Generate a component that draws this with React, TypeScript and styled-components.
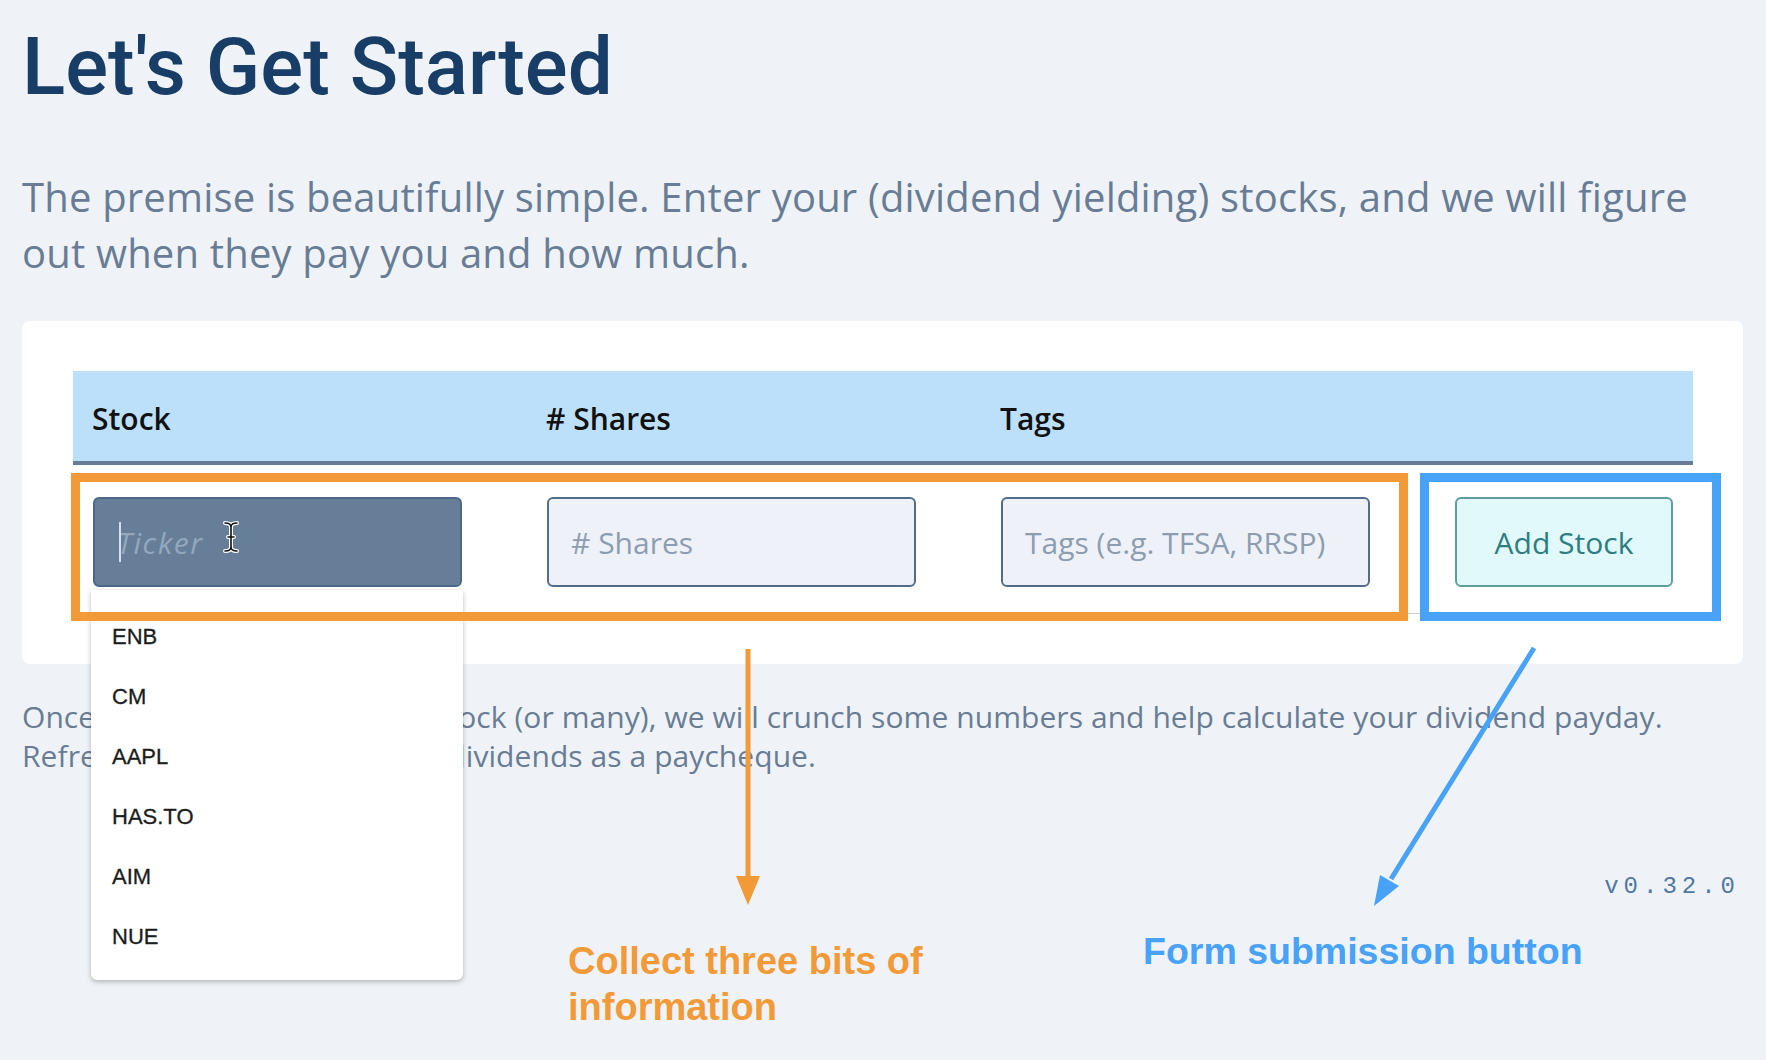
import React from "react";
import styled, { createGlobalStyle } from "styled-components";

const GlobalStyle = createGlobalStyle`
  html, body {
    margin: 0;
    padding: 0;
    background: #eff3f8;
  }
  body {
    font-family: "Open Sans", "Liberation Sans", sans-serif;
  }
  * {
    box-sizing: border-box;
  }
`;

const Page = styled.div`
  position: relative;
  width: 1766px;
  height: 1060px;
  padding: 0 23px 0 22px;
  overflow: hidden;
  background: #eff3f8;
`;

const Title = styled.h1`
  margin: 0;
  padding-top: 27px;
  font-family: Roboto, "Liberation Sans", sans-serif;
  font-weight: 500;
  font-size: 80px;
  line-height: 80px;
  color: #183e67;
`;

const Intro = styled.p`
  margin: 62px 0 0;
  font-size: 40px;
  line-height: 56px;
  letter-spacing: 0.18px;
  color: #687d95;
`;

const Card = styled.div`
  margin-top: 40px;
  background: #ffffff;
  border-radius: 8px;
  padding: 50px 50px 50px 51px;
`;

const HeaderRow = styled.div`
  display: grid;
  grid-template-columns: 454px 454px 454px 1fr;
  height: 94px;
  background: #bde0fa;
  border-bottom: 4px solid #687c95;
`;

const HeaderCell = styled.div`
  display: flex;
  align-items: center;
  padding: 5px 19px 0;
  font-size: 30px;
  font-weight: 600;
  color: #111;
`;

const Row = styled.div`
  display: grid;
  grid-template-columns: 454px 454px 454px 1fr;
  border-bottom: 1px solid #c9d2dc;
`;

const Cell = styled.div`
  position: relative;
  padding: 32px 20px 26px;
`;

const Field = styled.div`
  position: relative;
  width: 369px;
`;

const Input = styled.input<{ $active?: boolean }>`
  display: block;
  width: 100%;
  height: 90px;
  padding: 0 22px;
  border: 2px solid ${(p) => (p.$active ? "#4b6889" : "#536c89")};
  border-radius: 6px;
  background: ${(p) => (p.$active ? "#667e98" : "#eef2f8")};
  font-family: "Open Sans", sans-serif;
  font-size: 30px;
  color: #2b3d52;
  outline: none;

  &::placeholder {
    color: ${(p) => (p.$active ? "#93a7bd" : "#8d9db1")};
    font-style: ${(p) => (p.$active ? "italic" : "normal")};
    letter-spacing: ${(p) => (p.$active ? "1.5px" : "0")};
  }
`;

const Caret = styled.span`
  position: absolute;
  left: 26px;
  top: 25px;
  width: 2px;
  height: 40px;
  background: #d6e0ec;
`;

const IBeam = styled.svg`
  position: absolute;
  left: 129px;
  top: 24px;
`;

const Dropdown = styled.ul`
  position: absolute;
  top: 93px;
  left: -2px;
  z-index: 2;
  width: 372px;
  margin: 0;
  padding: 17px 0 13px;
  list-style: none;
  background: #ffffff;
  border-radius: 0 0 6px 6px;
  box-shadow: 0 2px 5px rgba(0, 0, 0, 0.25), 0 0 1px rgba(0, 0, 0, 0.15);
`;

const Option = styled.li`
  padding-left: 21px;
  font-family: "Liberation Sans", Arial, sans-serif;
  font-size: 22px;
  line-height: 60px;
  color: #1c1c1c;
  -webkit-text-stroke: 0.3px #1c1c1c;
`;

const AddButton = styled.button`
  display: block;
  width: 100%;
  height: 90px;
  border: 2px solid #5f9d9f;
  border-radius: 6px;
  background: #e2f9fc;
  font-family: "Open Sans", sans-serif;
  font-size: 30px;
  color: #2d7e80;
`;

const Outro = styled.p`
  margin: 33px 0 0;
  font-size: 30px;
  line-height: 39px;
  letter-spacing: 0.07px;
  color: #687d95;
`;

const Footer = styled.div`
  display: flex;
  justify-content: flex-end;
  margin-top: 97px;
  padding-right: 3px;
`;

const Version = styled.span`
  font-family: "Liberation Mono", "DejaVu Sans Mono", monospace;
  font-size: 24px;
  line-height: 30px;
  letter-spacing: 5px;
  color: #4f79a3;
`;

const Overlay = styled.div`
  position: absolute;
  inset: 0;
  z-index: 5;
  pointer-events: none;
`;

const Label = styled.div<{ $x: number; $y: number; $color: string; $size: number }>`
  position: absolute;
  left: ${(p) => p.$x}px;
  top: ${(p) => p.$y}px;
  font-family: "Liberation Sans", Arial, sans-serif;
  font-weight: 700;
  font-size: ${(p) => p.$size}px;
  line-height: 46px;
  color: ${(p) => p.$color};
  white-space: nowrap;
`;

const ORANGE = "#f29a38";
const BLUE = "#47a2f8";

const tickers = ["ENB", "CM", "AAPL", "HAS.TO", "AIM", "NUE"];

export default function App() {
  return (
    <>
      <GlobalStyle />
      <Page>
        <Title>Let's Get Started</Title>
        <Intro>
          The premise is beautifully simple. Enter your (dividend yielding)
          stocks, and we will figure out when they pay you and how much.
        </Intro>

        <Card>
          <HeaderRow>
            <HeaderCell>Stock</HeaderCell>
            <HeaderCell># Shares</HeaderCell>
            <HeaderCell>Tags</HeaderCell>
            <HeaderCell />
          </HeaderRow>
          <Row>
            <Cell>
              <Field>
                <Input $active placeholder="Ticker" />
                <Caret />
                <IBeam width="18" height="32" viewBox="0 0 18 32">
                  <path
                    d="M3 2 C7 2 9 3 9 6 L9 26 C9 29 7 30 3 30 M15 2 C11 2 9 3 9 6 M9 26 C9 29 11 30 15 30 M6 16 H12"
                    stroke="#fff"
                    strokeWidth="4"
                    fill="none"
                    strokeLinecap="round"
                  />
                  <path
                    d="M3 2 C7 2 9 3 9 6 L9 26 C9 29 7 30 3 30 M15 2 C11 2 9 3 9 6 M9 26 C9 29 11 30 15 30 M6 16 H12"
                    stroke="#111"
                    strokeWidth="1.6"
                    fill="none"
                    strokeLinecap="round"
                  />
                </IBeam>
                <Dropdown>
                  {tickers.map((t) => (
                    <Option key={t}>{t}</Option>
                  ))}
                </Dropdown>
              </Field>
            </Cell>
            <Cell>
              <Field>
                <Input placeholder="# Shares" />
              </Field>
            </Cell>
            <Cell>
              <Field>
                <Input placeholder="Tags (e.g. TFSA, RRSP)" />
              </Field>
            </Cell>
            <Cell>
              <AddButton>Add Stock</AddButton>
            </Cell>
          </Row>
        </Card>

        <Outro>
          Once you've added your first stock (or many), we will crunch some
          numbers and help calculate your dividend payday.
          <br />
          Refresh the page to view your dividends as a paycheque.
        </Outro>

        <Footer>
          <Version>v0.32.0</Version>
        </Footer>

        {/* annotation layer drawn over the screenshot */}
        <Overlay>
          <svg width="1766" height="1060" viewBox="0 0 1766 1060">
            <rect x="75.5" y="477.5" width="1328" height="139" fill="none" stroke={ORANGE} strokeWidth="9" />
            <rect x="1424.5" y="477.5" width="292" height="139" fill="none" stroke={BLUE} strokeWidth="9" />
            <line x1="748" y1="649" x2="748" y2="880" stroke={ORANGE} strokeWidth="5" />
            <polygon points="736,876 760,876 748,905" fill={ORANGE} />
            <line x1="1534" y1="648" x2="1391" y2="879" stroke={BLUE} strokeWidth="5" />
            <polygon points="1399,886 1380,875 1374,906" fill={BLUE} />
          </svg>
          <Label $x={568} $y={938} $color={ORANGE} $size={38}>
            Collect three bits of
            <br />
            information
          </Label>
          <Label $x={1143} $y={928} $color={BLUE} $size={37.5}>
            Form submission button
          </Label>
        </Overlay>
      </Page>
    </>
  );
}
